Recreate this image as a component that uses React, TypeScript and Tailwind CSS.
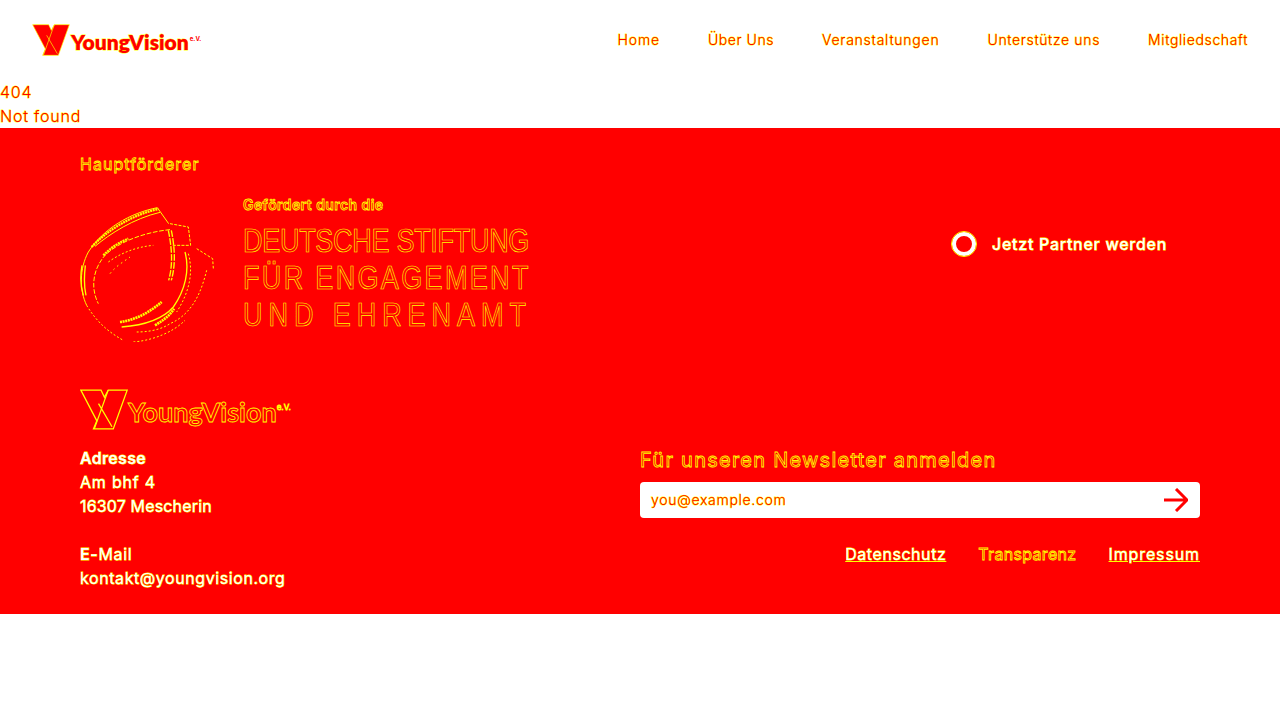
import React from 'react';

const fringeRed = "[-webkit-text-stroke:0.9px_#ffff00] [paint-order:stroke_fill]";
const solid = "text-white [-webkit-text-stroke:0.8px_#ffff00] [paint-order:stroke_fill]";
const hollow = "text-[#ff0000] [-webkit-text-stroke:0.8px_#ffff00]";

const Mark: React.FC<{ outline?: boolean; className?: string }> = ({ outline, className }) => (
  <svg viewBox="96 71 114 96" className={className} fill="none">
    <path
      d="M98 73 L146 73 L154 90 L163 73 L208 73 L175 165 L128 165 L136 146 Z"
      fill="#ff0000"
      stroke="#ffff00"
      strokeWidth={outline ? 3 : 2}
    />
    <path d="M163 73 L130 165 M140 105 L172 160" stroke="#ffff00" strokeWidth={outline ? 3 : 2} />
  </svg>
);

const Wreath: React.FC = () => (
  <svg viewBox="30 50 405 405" width={135} height={135} fill="none" stroke="#ffff00" strokeWidth={3} className="shrink-0">
    {/* outer band */}
    <path d="M262 52 C180 68 100 115 55 185 C28 235 28 300 50 345" />
    <path d="M65 170 C110 120 190 72 265 56" strokeWidth={7} strokeDasharray="6 2" />
    <path d="M75 168 C120 130 190 85 270 66" />
    <path d="M262 52 L296 100" />
    <path d="M36 225 C30 260 32 290 40 315 M46 225 C42 260 42 290 48 315" strokeWidth={4} />
    <path d="M50 345 C80 395 115 425 160 450" strokeDasharray="6 6" />
    <path d="M190 455 C250 450 310 425 345 390" strokeDasharray="6 6" />
    {/* second band */}
    <path d="M300 118 C225 125 145 155 105 195 C70 235 60 290 85 340" strokeDasharray="14 5" />
    <path d="M100 195 C125 170 150 155 175 145" strokeWidth={7} strokeDasharray="6 2" />
    <path d="M115 215 C150 190 195 170 250 165" strokeDasharray="6 6" />
    <path d="M120 250 C140 225 160 215 180 200" strokeDasharray="5 10" />
    {/* right side */}
    <path d="M300 100 L355 110 L362 165 L305 165" strokeDasharray="9 4" />
    <path d="M295 120 C305 170 310 220 296 270 M304 120 C314 170 318 220 304 270" strokeWidth={4} strokeDasharray="20 4" />
    <path d="M345 185 C360 240 345 300 310 350 C275 390 220 405 155 410" strokeWidth={4} />
    <path d="M355 190 C372 250 355 310 320 365" strokeDasharray="6 6" />
    <path d="M380 175 L428 205 L430 235" strokeDasharray="8 5" />
    <path d="M410 240 C395 300 370 370 300 400 C270 420 230 425 200 425" strokeDasharray="6 6" />
    <path d="M150 395 C195 390 240 365 275 335" strokeWidth={8} strokeDasharray="6 2" />
    <path d="M255 405 C280 390 300 375 312 355" strokeWidth={8} strokeDasharray="6 2" />
  </svg>
);

const App: React.FC = () => {
  return (
    <div className="min-h-screen bg-white font-['Inter','Liberation_Sans',sans-serif] text-base leading-6 text-[#ff0000]">
      {/* Header */}
      <header className="h-20 pl-8 pr-8 flex items-center justify-between">
        <a className="flex items-center gap-[1px]">
          <Mark className="w-[38px] h-[32px]" />
          <span className={`mt-[2px] font-['Lato',sans-serif] font-extrabold text-[21px] leading-none whitespace-nowrap ${fringeRed}`}>YoungVision</span>
          <span className="text-[6px] font-bold self-center -mt-[2px] whitespace-nowrap">e.V.</span>
        </a>
        <nav className={`flex gap-12 text-sm font-light ${fringeRed}`}>
          <a className="tracking-[0.06em]">Home</a>
          <a className="tracking-[0.04em]">Über Uns</a>
          <a className="tracking-[0.055em]">Veranstaltungen</a>
          <a className="tracking-[0.047em]">Unterstütze uns</a>
          <a className="tracking-[0.045em]">Mitgliedschaft</a>
        </nav>
      </header>

      {/* 404 */}
      <div className={`font-light tracking-[0.05em] ${fringeRed}`}>
        <p>404</p>
        <p>Not found</p>
      </div>

      {/* Footer */}
      <footer className="bg-[#ff0000] px-20 pt-6 pb-6">
        <p className={`tracking-[0.065em] ${hollow}`}>Hauptförderer</p>

        <div className="mt-[31px] flex items-start justify-between">
          <div className="flex items-start gap-7">
            <Wreath />
            <div className="-mt-[14px]">
              <p className={`text-[14px] font-semibold tracking-[0.03em] ${hollow}`}>Gefördert durch die</p>
              <div className={`mt-[5px] w-[348px] origin-left scale-x-[0.82] font-['Liberation_Sans',sans-serif] text-[33px] leading-[37px] whitespace-nowrap text-[#ff0000] [-webkit-text-stroke:0.7px_#ffff00]`}>
                <p className="tracking-[-0.4px]">DEUTSCHE STIFTUNG</p>
                <p className="tracking-[2.8px]">FÜR ENGAGEMENT</p>
                <p className="tracking-[7.2px]">UND EHRENAMT</p>
              </div>
            </div>
          </div>
          <a className={`mr-[33px] mt-[25px] flex items-center gap-4 font-medium tracking-[0.045em] ${solid}`}>
            <span className="w-6 h-6 rounded-full border-4 border-white bg-[#ff0000] outline outline-1 outline-[#ffff00]"></span>
            Jetzt Partner werden
          </a>
        </div>

        {/* Logo */}
        <div className="mt-[47px] flex items-center">
          <Mark outline className="w-[48px] h-[41px]" />
          <span className={`mt-[3px] font-['Lato',sans-serif] font-bold text-[27px] leading-none ${hollow}`}>YoungVision</span>
          <span className={`text-[8px] -mt-[6px] whitespace-nowrap ${hollow} [-webkit-text-stroke-width:0.3px]`}>e.V.</span>
        </div>

        <div className="mt-[16px] grid grid-cols-2">
          {/* Contact */}
          <div className={`font-normal tracking-[0.04em] ${solid}`}>
            <p className="font-semibold tracking-[0.02em]">Adresse</p>
            <p className="tracking-[0.05em]">Am bhf 4</p>
            <p className="tracking-[0.01em]">16307 Mescherin</p>
            <p className="mt-6"><span className="font-semibold">E-</span>Mail</p>
            <p className="tracking-[0.036em]">kontakt@youngvision.org</p>
          </div>

          {/* Newsletter */}
          <div className="flex flex-col">
            <h3 className={`text-[20px] leading-6 mt-[2px] tracking-[0.062em] ${hollow}`}>Für unseren Newsletter anmelden</h3>
            <div className="mt-[10px] h-9 bg-white rounded flex items-center justify-between pl-[11px] pr-3">
              <span className={`text-sm font-light tracking-[0.05em] ${fringeRed}`}>you@example.com</span>
              <svg viewBox="0 0 24 24" className="w-6 h-6" fill="none" stroke="#ff0000" strokeWidth={3}>
                <path d="M0 12H23 M12 1L23 12L12 23" />
              </svg>
            </div>
            <div className="mt-6 flex justify-end gap-8">
              <a className={`underline tracking-[0.035em] ${solid}`}>Datenschutz</a>
              <a className={`tracking-[0.02em] ${hollow}`}>Transparenz</a>
              <a className={`underline tracking-[0.055em] ${solid}`}>Impressum</a>
            </div>
          </div>
        </div>
      </footer>
    </div>
  );
};

export default App;
